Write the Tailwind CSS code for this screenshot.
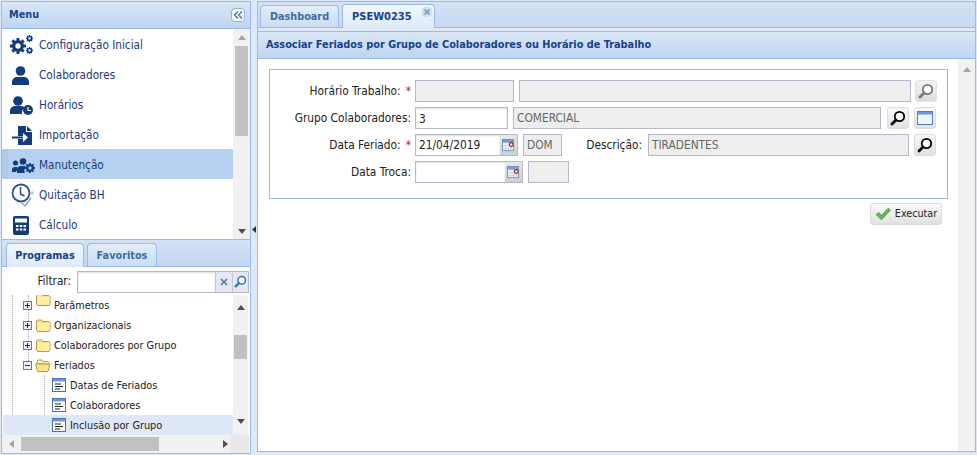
<!DOCTYPE html>
<html lang="en">
<head>
    <meta charset="UTF-8">
    <title>PSEW0235</title>
    <script src="https://cdn.jsdelivr.net/npm/@tailwindcss/browser@4"></script>
</head>
<body class="w-[977px] h-[455px] overflow-hidden bg-[#dfe8f6] font-['DejaVu_Sans_Condensed','Noto_Sans',sans-serif] text-[11.5px] text-[#222]">
    <svg class="hidden">
        <symbol id="lens" viewBox="0 0 16 16">
            <circle cx="9.500" cy="6.500" r="4.700" fill="#fff" stroke="currentColor" stroke-width="1.800" />
            <path d="M6 10 2 14" stroke="currentColor" stroke-width="2.800" stroke-linecap="round" />
        </symbol>
        <symbol id="cal" viewBox="0 0 14 14">
            <rect x=".5" y=".5" width="12" height="12" fill="#f4f7fb" stroke="#6f8fb8" />
            <rect x="1" y="1" width="11" height="3" fill="#7c9ccb" />
            <path d="M1 7h11M1 10h11M4 4v8M7 4v8M10 4v8" stroke="#c3cfdf" stroke-width=".8" />
            <circle cx="10" cy="6" r="2" fill="#fff" stroke="#9b1c2c" stroke-width="1.300" />
        </symbol>
        <symbol id="folder" viewBox="0 0 15 13">
            <path d="M.5 11V2.500l1-1.500h4l1 1.500H13l1 1V11l-1 1.500H1.500z" fill="#fde48a" stroke="#b49a4d" />
            <path d="M1.500 4h12v7.500h-12z" fill="#fff0a8" />
        </symbol>
        <symbol id="folderopen" viewBox="0 0 16 13">
            <path d="M2 4V2l1-1h4l1 1.500h5l.5 1V5H2z" fill="#fff3b8" stroke="#b49a4d" />
            <path d="M.5 5H15l-2 7.500H2.500z" fill="#fde48a" stroke="#b49a4d" />
        </symbol>
        <symbol id="leaf" viewBox="0 0 14 14">
            <rect x=".5" y=".5" width="13" height="13" fill="#fff" stroke="#4a74b4" />
            <rect x="1" y="1" width="12" height="2.500" fill="#6f96d6" />
            <path d="M3 6h6M3 8.500h8M3 11h5" stroke="#222" />
        </symbol>
        <symbol id="plus" viewBox="0 0 9 9">
            <rect x=".5" y=".5" width="8" height="8" fill="#e8eef7" stroke="#5f7ea8" />
            <path d="M2 4.500h5M4.500 2v5" stroke="#1c2f55" />
        </symbol>
        <symbol id="minus" viewBox="0 0 9 9">
            <rect x=".5" y=".5" width="8" height="8" fill="#e8eef7" stroke="#5f7ea8" />
            <path d="M2 4.500h5" stroke="#1c2f55" />
        </symbol>
        <symbol id="gear" viewBox="0 0 24 24">
            <circle cx="12" cy="12" r="6.500" fill="none" stroke="currentColor" stroke-width="5" />
            <path d="M12 0v24M0 12h24M3.500 3.500l17 17M20.500 3.500l-17 17" stroke="currentColor" stroke-width="4.500" stroke-dasharray="5 14" />
        </symbol>
    </svg>

    <div class="flex h-full p-px">
        <!-- left column -->
        <div class="w-[250px] flex flex-col shrink-0">
            <div class="h-[239px] border border-[#99bbe8] flex flex-col bg-white">
                <div class="h-[27px] flex items-center justify-between pl-[7px] pr-[5px] border-b border-[#99bbe8] bg-linear-to-b from-[#dae7f6] to-[#bfd5f0]">
                    <span class="font-bold text-[10.8px] text-[#15428b]">Menu</span>
                    <button class="w-[14px] h-[14px] rounded-sm border border-[#8fb0dd] bg-white flex items-center justify-center">
                        <svg width="10" height="8" viewBox="0 0 10 8" fill="none" stroke="#3f6fb0" stroke-width="1.400"><path d="M5 .5 1.500 4 5 7.500M9 .5 5.500 4 9 7.500" /></svg>
                    </button>
                </div>
                <div class="flex flex-1 min-h-0">
                    <ul class="flex-1 text-[#1b3a80] text-[11.7px]">
                        <li class="h-[30px] flex items-center pt-[4px]">
                            <span class="w-[37px] -mt-[2px] flex justify-center pl-[2px] text-[#123c7c]">
                                <svg width="23" height="20" viewBox="0 0 23 20"><use href="#gear" x="0" y="3" width="16" height="16" /><use href="#gear" x="16" y="0" width="7" height="7" /><use href="#gear" x="16" y="12" width="7" height="7" /></svg>
                            </span>Configuração Inicial</li>
                        <li class="h-[30px] flex items-center pt-[4px]">
                            <span class="w-[37px] -mt-[2px] flex justify-center text-[#123c7c]">
                                <svg width="17" height="19" viewBox="0 0 17 19" fill="currentColor"><circle cx="8.500" cy="5" r="4.800" /><path d="M0 19v-3c0-3 2.500-5 5-5h7c2.500 0 5 2 5 5v3z" /></svg>
                            </span>Colaboradores</li>
                        <li class="h-[30px] flex items-center pt-[4px]">
                            <span class="w-[37px] -mt-[2px] flex justify-center pl-[2px] text-[#123c7c]">
                                <svg width="23" height="19" viewBox="0 0 23 19" fill="currentColor"><circle cx="8" cy="5" r="4.800" /><path d="M0 18v-3c0-3 2.500-5 5-5h6c2 0 3 .7 3.500 2A6 6 0 0 0 12 18z" /><circle cx="18" cy="14" r="5" /><path d="M18 11v3.500h3" stroke="#fff" stroke-width="1.200" fill="none" /></svg>
                            </span>Horários</li>
                        <li class="h-[30px] flex items-center pt-[4px]">
                            <span class="w-[37px] -mt-[2px] flex justify-center pl-[3px] text-[#123c7c]">
                                <svg width="20" height="19" viewBox="0 0 20 19" fill="currentColor"><path d="M6 0h8v6h6v13H6v-6h5v3l5-4.500L11 7v3H6z" /><path d="M15 0l5 5h-5z" /><path d="M0 10.500h11v2H0z" /></svg>
                            </span>Importação</li>
                        <li class="h-[30px] flex items-center pt-[4px] bg-[#b5d1ef] border-l-[6px] border-l-[#afcae8]">
                            <span class="w-[31px] -mt-[2px] flex justify-center text-[#123c7c]">
                                <svg width="23" height="15" viewBox="0 0 23 15" fill="currentColor"><circle cx="3.500" cy="5" r="2.500" /><path d="M0 14v-2c0-2 1-3 3-3h2l1 1-2 4z" /><circle cx="11" cy="3.500" r="3.300" /><path d="M5 15v-3c0-2 1.500-4 4-4h4c1 0 1 1 0 2a6 6 0 0 0 0 5z" /><use href="#gear" x="13" y="5" width="10" height="10" /></svg>
                            </span>Manutenção</li>
                        <li class="h-[30px] flex items-center pt-[4px]">
                            <span class="w-[37px] -mt-[2px] flex justify-center pl-[4px] text-[#2e4f8a]">
                                <svg width="24" height="24" viewBox="0 0 24 24" fill="none" stroke="currentColor"><circle cx="10" cy="10" r="8.500" stroke-width="1.800" /><path d="M9.500 4v7l4 2" stroke-width="1.500" /><path d="M11 20l3 3 6-8" stroke="#8a9bb8" stroke-width="1.300" /><path d="M21 8v4M19 10h4" stroke="#a9b6cc" /></svg>
                            </span>Quitação BH</li>
                        <li class="h-[30px] flex items-center pt-[4px]">
                            <span class="w-[37px] -mt-[2px] flex justify-center text-[#123c7c]">
                                <svg width="16" height="19" viewBox="0 0 16 19"><rect width="16" height="19" rx="2" fill="currentColor" /><rect x="2" y="2.500" width="12" height="4" fill="#fff" /><path d="M3 9h2.500v2H3zM6.800 9h2.500v2H6.800zM10.500 9H13v2h-2.500zM3 12.500h2.500v2H3zM6.800 12.500h2.500v2H6.800zM10.500 12.500H13v2h-2.500z" fill="#fff" /></svg>
                            </span>Cálculo</li>
                    </ul>
                    <div class="w-[17px] bg-[#f1f1f1] flex flex-col items-center">
                        <div class="h-[17px] flex items-center"><svg width="8" height="5"><path d="M4 0l4 5H0z" fill="#a3a3a3" /></svg></div>
                        <div class="w-[13px] h-[90px] bg-[#c1c1c1]"></div>
                        <div class="flex-1"></div>
                        <div class="h-[15px] flex items-center"><svg width="8" height="5"><path d="M0 0h8L4 5z" fill="#505050" /></svg></div>
                    </div>
                </div>
            </div>

            <div class="flex-1 min-h-0 border-x border-b border-[#99bbe8] flex flex-col bg-white">
                <div class="h-[27px] flex items-end gap-[3px] pl-[4px] pt-[3px] bg-linear-to-b from-[#d4e2f4] to-[#c3d7f0] border-b border-[#99bbe8]">
                    <div class="w-[78px] h-[24px] -mb-px pt-[2px] rounded-t-[4px] border border-b-0 border-[#99bbe8] bg-linear-to-b from-[#f2f7fd] to-[#dfeafa] font-bold text-[10.8px] text-[#15428b] flex items-center justify-center">Programas</div>
                    <div class="w-[70px] h-[23px] pt-[2px] rounded-t-[4px] border border-b-0 border-[#99bbe8] bg-linear-to-b from-[#e3edf9] to-[#cbdcf3] font-bold text-[10.8px] text-[#416aa3] flex items-center justify-center">Favoritos</div>
                </div>
                <div class="h-[28px] flex items-center justify-end pr-px pt-[1px]">
                    <span class="mr-[6px] text-[11.7px]">Filtrar:</span>
                    <div class="w-[172px] h-[22px] flex border border-[#b5b8c8] bg-white">
                        <div class="flex-1 shadow-[inset_0_1px_2px_#ddd]"></div>
                        <div class="w-[17px] bg-[#e4e8ee] border-l border-[#c5c9d3] flex items-center justify-center text-[#4d7cb8]">
                            <svg width="8" height="8" stroke="currentColor" stroke-width="1.700"><path d="M1 1l6 6M7 1 1 7" /></svg>
                        </div>
                        <div class="w-[16px] bg-[#e4e8ee] border-l border-[#c5c9d3] flex items-center justify-center text-[#2f74c4]">
                            <svg width="13" height="13"><use href="#lens" /></svg>
                        </div>
                    </div>
                </div>
                <div class="flex flex-1 min-h-0">
                    <div class="flex-1 relative overflow-hidden text-[10.8px] ml-px">
                        <div class="absolute left-[9px] top-0 bottom-0 border-l border-dotted border-[#aaa]"></div>
                        <div class="absolute left-[25px] top-0 h-[70px] border-l border-dotted border-[#aaa]"></div>
                        <div class="absolute left-[41px] top-[80px] h-[50px] border-l border-dotted border-[#aaa]"></div>
                        <div class="h-[20px] flex items-center pl-[20px] relative">
                            <svg class="w-[9px] h-[9px]"><use href="#plus" /></svg>
                            <svg class="w-[15px] h-[13px] ml-[4px] -mt-[11px]"><use href="#folder" /></svg>
                            <span class="ml-[3px] mt-[2px]">Parâmetros</span>
                        </div>
                        <div class="h-[20px] flex items-center pl-[20px] relative">
                            <svg class="w-[9px] h-[9px]"><use href="#plus" /></svg>
                            <svg class="w-[15px] h-[13px] ml-[4px]"><use href="#folder" /></svg>
                            <span class="ml-[3px] mt-[2px]">Organizacionais</span>
                        </div>
                        <div class="h-[20px] flex items-center pl-[20px] relative">
                            <svg class="w-[9px] h-[9px]"><use href="#plus" /></svg>
                            <svg class="w-[15px] h-[13px] ml-[4px]"><use href="#folder" /></svg>
                            <span class="ml-[3px] mt-[2px]">Colaboradores por Grupo</span>
                        </div>
                        <div class="h-[20px] flex items-center pl-[20px] relative">
                            <svg class="w-[9px] h-[9px]"><use href="#minus" /></svg>
                            <svg class="w-[16px] h-[13px] ml-[3px]"><use href="#folderopen" /></svg>
                            <span class="ml-[3px] mt-[2px]">Feriados</span>
                        </div>
                        <div class="h-[20px] flex items-center pl-[49px] relative">
                            <svg class="w-[14px] h-[14px]"><use href="#leaf" /></svg>
                            <span class="ml-[4px] mt-[2px]">Datas de Feriados</span>
                        </div>
                        <div class="h-[20px] flex items-center pl-[49px] relative">
                            <svg class="w-[14px] h-[14px]"><use href="#leaf" /></svg>
                            <span class="ml-[4px] mt-[2px]">Colaboradores</span>
                        </div>
                        <div class="h-[20px] flex items-center pl-[49px] bg-[#dfe8f6] relative">
                            <svg class="w-[14px] h-[14px]"><use href="#leaf" /></svg>
                            <span class="ml-[4px] mt-[2px]">Inclusão por Grupo</span>
                        </div>
                    </div>
                    <div class="w-[15px] mr-[2px] bg-[#f1f1f1] flex flex-col items-center">
                        <div class="h-[40px] pt-[10px]"><svg class="block" width="8" height="5"><path d="M4 0l4 5H0z" fill="#505050" /></svg></div>
                        <div class="w-[13px] h-[24px] bg-[#c1c1c1]"></div>
                        <div class="flex-1"></div>
                        <div class="h-[16px]"><svg class="block" width="8" height="5"><path d="M0 0h8L4 5z" fill="#505050" /></svg></div>
                    </div>
                </div>
                <div class="h-[18px] flex bg-[#f1f1f1] items-center mr-px">
                    <div class="w-[19px] flex justify-center"><svg width="5" height="8"><path d="M5 0v8L0 4z" fill="#a3a3a3" /></svg></div>
                    <div class="w-[138px] h-[14px] bg-[#c1c1c1]"></div>
                    <div class="w-[72px] flex justify-end pr-[3px]"><svg width="5" height="8"><path d="M0 0v8l5-4z" fill="#505050" /></svg></div>
                    <div class="flex-1 h-full bg-[#e8e8e8]"></div>
                </div>
            </div>
        </div>

        <!-- splitter -->
        <div class="w-[6px] shrink-0 flex items-end pb-[221px] justify-center">
            <svg width="4" height="7"><path d="M4 0v7L0 3.500z" fill="#333" /></svg>
        </div>

        <!-- right column -->
        <div class="flex-1 flex flex-col border border-[#99bbe8] min-w-0 bg-white mb-[2px]">
            <div class="h-[26px] flex items-end gap-[3px] pl-[2px] bg-linear-to-b from-[#d4e2f4] to-[#c7daf1] border-b border-[#99bbe8]">
                <div class="w-[79px] h-[22px] pt-[2px] rounded-t-[4px] border border-b-0 border-[#99bbe8] bg-linear-to-b from-[#e3edf9] to-[#cbdcf3] font-bold text-[10.8px] text-[#416aa3] flex items-center justify-center">Dashboard</div>
                <div class="w-[93px] h-[24px] -mb-px pt-[2px] rounded-t-[4px] border border-b-0 border-[#99bbe8] bg-linear-to-b from-[#f2f7fd] to-[#dfeafa] font-bold text-[11px] text-[#15428b] flex items-center pl-[9px] relative">PSEW0235
                    <span class="absolute top-[2px] right-[2px] w-[10px] h-[10px] rounded-sm bg-[#cfdcee] flex items-center justify-center">
                        <svg width="6" height="6" stroke="#7c93b5" stroke-width="1.500"><path d="M.5.5l5 5M5.500.5l-5 5" /></svg>
                    </span>
                </div>
            </div>
            <div class="h-[3px] bg-[#dfe8f6]"></div>
            <div class="h-[28px] flex items-center pl-[8px] font-bold text-[10.85px] text-[#15428b] border-y border-[#99bbe8] bg-linear-to-b from-[#dae7f6] to-[#bfd5f0]">Associar Feriados por Grupo de Colaboradores ou Horário de Trabalho</div>
            <div class="flex-1 flex min-h-0">
                <div class="flex-1 pl-[11px] pr-[10px] pt-[10px]">
                    <div class="h-[130px] border border-[#99bbe8] pt-[10px] flex flex-col gap-[5px] text-[11.8px]">
                        <div class="h-[22px] flex items-center">
                            <label class="w-[145px] text-right pr-[4px] pt-[2px]">Horário Trabalho:<span class="text-[#b03030] ml-[5px]">*</span></label>
                            <div class="w-[99px] h-full bg-[#eee] border border-[#b5b8c8]"></div>
                            <div class="w-[392px] ml-[5px] h-full bg-[#eee] border border-[#b5b8c8]"></div>
                            <button class="w-[22px] h-full ml-[4px] rounded-[3px] border border-[#e2e2e2] bg-linear-to-b from-[#f4f4f4] to-[#dcdcdc] flex items-center justify-center text-[#777]">
                                <svg width="16" height="16"><use href="#lens" /></svg>
                            </button>
                        </div>
                        <div class="h-[22px] flex items-center">
                            <label class="w-[145px] text-right pr-[4px] pt-[2px]">Grupo Colaboradores:</label>
                            <input class="w-[93px] h-full px-[3px] pt-[2px] bg-white border border-[#b5b8c8] shadow-[inset_0_1px_2px_#ddd] text-[#222] outline-none" value="3">
                            <div class="w-[368px] ml-[5px] h-full bg-[#eee] border border-[#b5b8c8] flex items-center px-[3px] pt-[2px] text-[#666]">COMERCIAL</div>
                            <button class="w-[22px] h-full ml-[6px] rounded-[3px] border border-[#dcdcdc] bg-linear-to-b from-[#fafafa] to-[#e0e0e0] flex items-center justify-center text-black">
                                <svg width="16" height="16"><use href="#lens" /></svg>
                            </button>
                            <button class="w-[22px] h-full ml-[5px] rounded-[3px] border border-[#dcdcdc] bg-linear-to-b from-[#fafafa] to-[#e0e0e0] flex items-center justify-center">
                                <svg width="16" height="14"><rect x=".5" y=".5" width="15" height="13" fill="#f0f5fc" stroke="#4f7cc0" /><rect x="1" y="1" width="14" height="2.500" fill="#6f9ad8" /></svg>
                            </button>
                        </div>
                        <div class="h-[22px] flex items-center">
                            <label class="w-[145px] text-right pr-[4px] pt-[2px]">Data Feriado:<span class="text-[#b03030] ml-[5px]">*</span></label>
                            <div class="w-[103px] h-full flex border border-[#b5b8c8] bg-white">
                                <input class="flex-1 min-w-0 px-[3px] pt-[2px] shadow-[inset_0_1px_2px_#ddd] text-[#222] outline-none" value="21/04/2019">
                                <span class="w-[17px] bg-linear-to-b from-[#e8e8e8] to-[#cfcfcf] flex items-center justify-center">
                                    <svg width="13" height="13"><use href="#cal" /></svg>
                                </span>
                            </div>
                            <div class="w-[39px] ml-[5px] h-full bg-[#eee] border border-[#b5b8c8] flex items-center px-[3px] pt-[2px] text-[#666]">DOM</div>
                            <label class="w-[86px] text-right pr-[6px] pt-[2px] shrink-0">Descrição:</label>
                            <div class="w-[261px] h-full bg-[#eee] border border-[#b5b8c8] flex items-center px-[3px] pt-[2px] text-[#666]">TIRADENTES</div>
                            <button class="w-[22px] h-full ml-[5px] rounded-[3px] border border-[#dcdcdc] bg-linear-to-b from-[#fafafa] to-[#e0e0e0] flex items-center justify-center text-black">
                                <svg width="16" height="16"><use href="#lens" /></svg>
                            </button>
                        </div>
                        <div class="h-[22px] flex items-center">
                            <label class="w-[145px] text-right pr-[4px] pt-[2px]">Data Troca:</label>
                            <div class="w-[108px] h-full flex border border-[#b5b8c8] bg-white">
                                <input class="flex-1 min-w-0 px-[3px] shadow-[inset_0_1px_2px_#ddd] outline-none">
                                <span class="w-[17px] bg-linear-to-b from-[#e8e8e8] to-[#cfcfcf] flex items-center justify-center">
                                    <svg width="13" height="13"><use href="#cal" /></svg>
                                </span>
                            </div>
                            <div class="w-[41px] ml-[5px] h-full bg-[#eee] border border-[#b5b8c8]"></div>
                        </div>
                    </div>
                    <div class="flex justify-end mt-[4px] mr-[6px]">
                        <button class="w-[72px] h-[22px] rounded-[3px] border border-[#dcdcdc] bg-linear-to-b from-[#fafafa] to-[#e0e0e0] flex items-center justify-center gap-[4px] text-[10.7px] text-[#222]">
                            <svg width="16" height="14" viewBox="0 0 15 13"><path d="M1 7l2.500-2 2.500 3L12.500 1 14.500 3 6 12z" fill="#6db35c" stroke="#4d8d40" stroke-width=".7" /></svg>
                            Executar
                        </button>
                    </div>
                </div>
                <div class="w-[17px] bg-[#f1f1f1] pt-[8px] flex justify-center">
                    <svg class="block" width="8" height="5"><path d="M4 0l4 5H0z" fill="#a3a3a3" /></svg>
                </div>
            </div>
        </div>
    </div>
</body>
</html>
